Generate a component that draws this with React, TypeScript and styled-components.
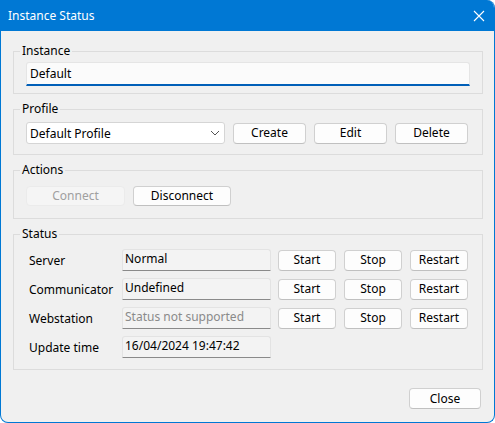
import React from "react";
import styled, { createGlobalStyle } from "styled-components";

const Global = createGlobalStyle`
  html, body { margin: 0; padding: 0; background: #ffffff; }
  * { box-sizing: border-box; }
`;

const Window = styled.div`
  width: 495px;
  height: 423px;
  display: flex;
  flex-direction: column;
  border: 1px solid #0078d4;
  border-top: none;
  border-radius: 0 8px 8px 8px;
  overflow: hidden;
  background: #f0f0f0;
  font-family: "Noto Sans", "Segoe UI", sans-serif;
  font-size: 12px;
  color: #000;
`;

const TitleBar = styled.div`
  height: 31px;
  flex: none;
  background: #0078d4;
  color: #fff;
  display: flex;
  align-items: center;
  justify-content: space-between;
  padding: 0 8px 0 8px;
  margin: 0 -1px;
  font-size: 12px;
`;

const CloseX = styled.svg`
  width: 12px;
  height: 12px;
  margin-right: 2px;
`;

const Body = styled.div`
  flex: 1;
  display: flex;
  flex-direction: column;
  padding: 20px 11px 13px 12px;
  gap: 15px;
`;

const Group = styled.div<{ $pt: number; $pb: number }>`
  position: relative;
  border: 1px solid #dcdcdc;
  padding: ${(p) => p.$pt}px 12px ${(p) => p.$pb}px 12px;
`;

const Legend = styled.span`
  position: absolute;
  top: -9px;
  left: 6px;
  padding: 0 2px;
  background: #f0f0f0;
  line-height: 16px;
`;

const TextBox = styled.div`
  height: 24px;
  background: #fbfbfb;
  border: 1px solid #e5e5e5;
  border-bottom: 2px solid #005fb8;
  border-radius: 3px 3px 0 0;
  display: flex;
  align-items: center;
  padding: 0 3px;
  line-height: 16px;
`;

const Row = styled.div<{ $gap?: number }>`
  display: flex;
  align-items: center;
  gap: ${(p) => p.$gap ?? 8}px;
`;

const Combo = styled.div`
  width: 199px;
  height: 22px;
  background: #fff;
  border: 1px solid #d5d5d5;
  border-radius: 3px;
  display: flex;
  align-items: center;
  justify-content: space-between;
  padding: 0 4px 0 3px;
`;

const Button = styled.button<{ $w: number; $h?: number }>`
  width: ${(p) => p.$w}px;
  height: ${(p) => p.$h ?? 21}px;
  background: #fdfdfd;
  border: 1px solid #d0d0d0;
  border-bottom-color: #c0c0c0;
  border-radius: 4px;
  font-family: inherit;
  font-size: 12px;
  color: #000;
  padding: 0;
  line-height: 16px;
  &:disabled {
    background: #f5f5f5;
    border-color: #ebebeb;
    color: #a0a0a0;
  }
`;

const StatusGrid = styled.div`
  display: flex;
  flex-direction: column;
  gap: 7px;
`;

const StatusLabel = styled.span`
  width: 96px;
  padding-left: 3px;
`;

const Field = styled.div<{ $dim?: boolean }>`
  width: 149px;
  height: 22px;
  background: #f3f3f3;
  border: 1px solid #e3e3e3;
  border-bottom-color: #8a8a8a;
  border-radius: 3px 3px 0 0;
  display: flex;
  align-items: center;
  padding: 0 2px 2px 2px;
  margin-right: 7px;
  color: ${(p) => (p.$dim ? "#8a8a8a" : "#000")};
  line-height: 16px;
`;

const Footer = styled.div`
  margin-top: auto;
  display: flex;
  justify-content: flex-end;
  padding-right: 2px;
`;

const rows = [
  { label: "Server", value: "Normal", btns: true },
  { label: "Communicator", value: "Undefined", btns: true },
  { label: "Webstation", value: "Status not supported", btns: true, dim: true },
  { label: "Update time", value: "16/04/2024 19:47:42", btns: false },
];

export default function App() {
  return (
    <>
      <Global />
      <Window>
        <TitleBar>
          <span>Instance Status</span>
          <CloseX viewBox="0 0 12 12">
            <path d="M1 1 L11 11 M11 1 L1 11" stroke="#fff" strokeWidth="1.1" />
          </CloseX>
        </TitleBar>
        <Body>
          <Group $pt={10} $pb={7}>
            <Legend>Instance</Legend>
            <TextBox>Default</TextBox>
          </Group>
          <Group $pt={12} $pb={10}>
            <Legend>Profile</Legend>
            <Row>
              <Combo>
                <span>Default Profile</span>
                <svg width="10" height="6" viewBox="0 0 10 6">
                  <path d="M1 1 L5 5 L9 1" stroke="#555" strokeWidth="1" fill="none" />
                </svg>
              </Combo>
              <Button $w={73}>Create</Button>
              <Button $w={73}>Edit</Button>
              <Button $w={73}>Delete</Button>
            </Row>
          </Group>
          <Group $pt={15} $pb={12}>
            <Legend>Actions</Legend>
            <Row $gap={8}>
              <Button $w={99} $h={20} disabled>
                Connect
              </Button>
              <Button $w={98} $h={20}>
                Disconnect
              </Button>
            </Row>
          </Group>
          <Group $pt={14} $pb={11}>
            <Legend>Status</Legend>
            <StatusGrid>
              {rows.map((r) => (
                <Row key={r.label} $gap={0}>
                  <StatusLabel>{r.label}</StatusLabel>
                  <Field $dim={r.dim}>{r.value}</Field>
                  {r.btns && (
                    <Row $gap={8}>
                      <Button $w={58}>Start</Button>
                      <Button $w={58}>Stop</Button>
                      <Button $w={58}>Restart</Button>
                    </Row>
                  )}
                </Row>
              ))}
            </StatusGrid>
          </Group>
          <Footer>
            <Button $w={72}>Close</Button>
          </Footer>
        </Body>
      </Window>
    </>
  );
}
